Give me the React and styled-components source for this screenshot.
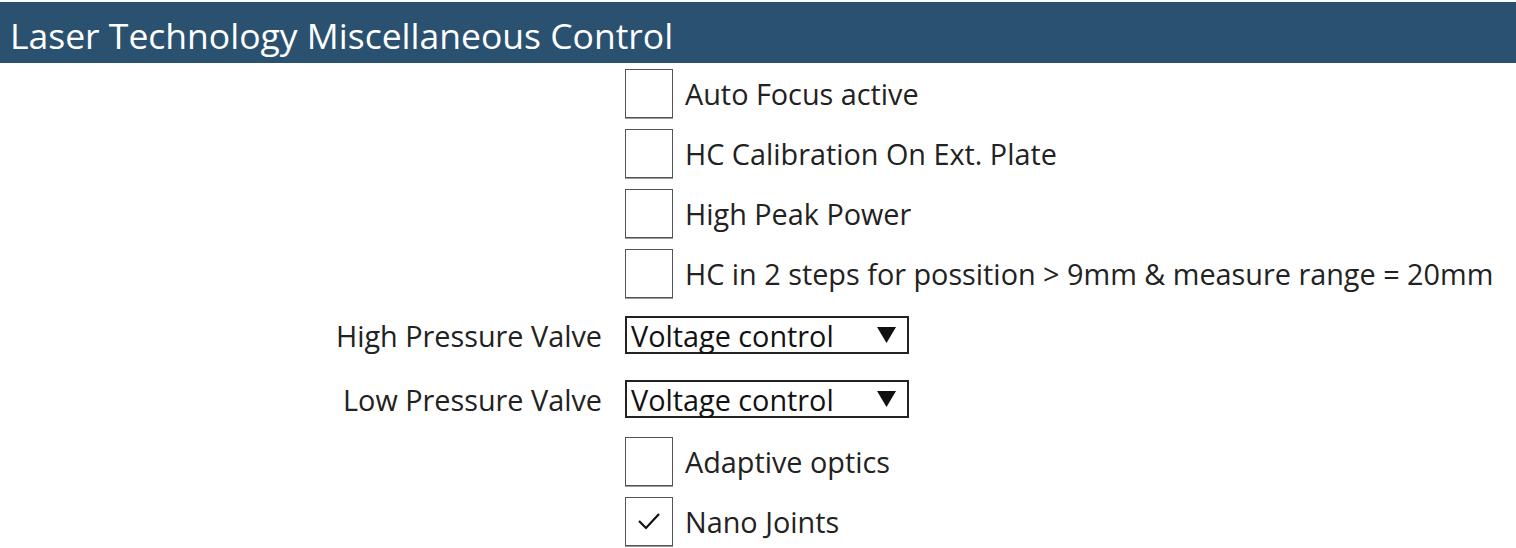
import styled, { createGlobalStyle } from 'styled-components';

const GlobalStyle = createGlobalStyle`
  body {
    margin: 0;
    background: #ffffff;
    font-family: 'Open Sans', 'Noto Sans', sans-serif;
    color: #111;
  }
`;

const Page = styled.div`
  width: 1516px;
  padding-top: 2px;
`;

const Header = styled.div`
  height: 61px;
  background: #2b5170;
  color: #ffffff;
  display: flex;
  align-items: center;
  padding: 4px 0 0 10px;
  box-sizing: border-box;
  font-size: 35.5px;
  white-space: nowrap;
`;

const Form = styled.div`
  display: grid;
  grid-template-columns: 602px auto;
  column-gap: 23px;
  justify-content: start;
`;

const Label = styled.div`
  height: ${(p) => p.h}px;
  display: flex;
  align-items: center;
  justify-content: flex-end;
  font-size: 28.8px;
  color: #222;
  white-space: nowrap;
`;

const Control = styled.div`
  height: ${(p) => p.h}px;
  display: flex;
  align-items: center;
  gap: 12px;
  font-size: 28.8px;
  color: #222;
  white-space: nowrap;
`;

const Box = styled.div`
  width: 46px;
  height: 47px;
  border: 1px solid #555;
  box-shadow: 0 1px 0 #999;
  background: #fff;
  display: flex;
  align-items: center;
  justify-content: center;
`;

const Select = styled.div`
  box-sizing: border-box;
  height: 38px;
  width: 284px;
  border: 2px solid #222;
  display: flex;
  align-items: center;
  justify-content: space-between;
  padding: 0 11px 0 4px;
  font-size: 28.8px;
  color: #111;
`;

const Arrow = () => (
  <svg width="19" height="16" viewBox="0 0 19 16">
    <polygon points="0,0 19,0 9.5,16" fill="#111" />
  </svg>
);

const Check = ({ checked }) => (
  <Box>
    {checked && (
      <svg width="26" height="26" viewBox="0 0 26 26">
        <polyline points="3,13 10,20 23,6" fill="none" stroke="#111" strokeWidth="2.2" />
      </svg>
    )}
  </Box>
);

const CheckRow = ({ text, checked }) => (
  <>
    <Label h={60} />
    <Control h={60}>
      <Check checked={checked} />
      <span>{text}</span>
    </Control>
  </>
);

const SelectRow = ({ label, value }) => (
  <>
    <Label h={64}>{label}</Label>
    <Control h={64}>
      <Select>
        <span>{value}</span>
        <Arrow />
      </Select>
    </Control>
  </>
);

export default function App() {
  return (
    <Page>
      <GlobalStyle />
      <Header>Laser Technology Miscellaneous Control</Header>
      <Form>
        <CheckRow text="Auto Focus active" />
        <CheckRow text="HC Calibration On Ext. Plate" />
        <CheckRow text="High Peak Power" />
        <CheckRow text="HC in 2 steps for possition > 9mm & measure range = 20mm" />
        <SelectRow label="High Pressure Valve" value="Voltage control" />
        <SelectRow label="Low Pressure Valve" value="Voltage control" />
        <CheckRow text="Adaptive optics" />
        <CheckRow text="Nano Joints" checked />
      </Form>
    </Page>
  );
}
